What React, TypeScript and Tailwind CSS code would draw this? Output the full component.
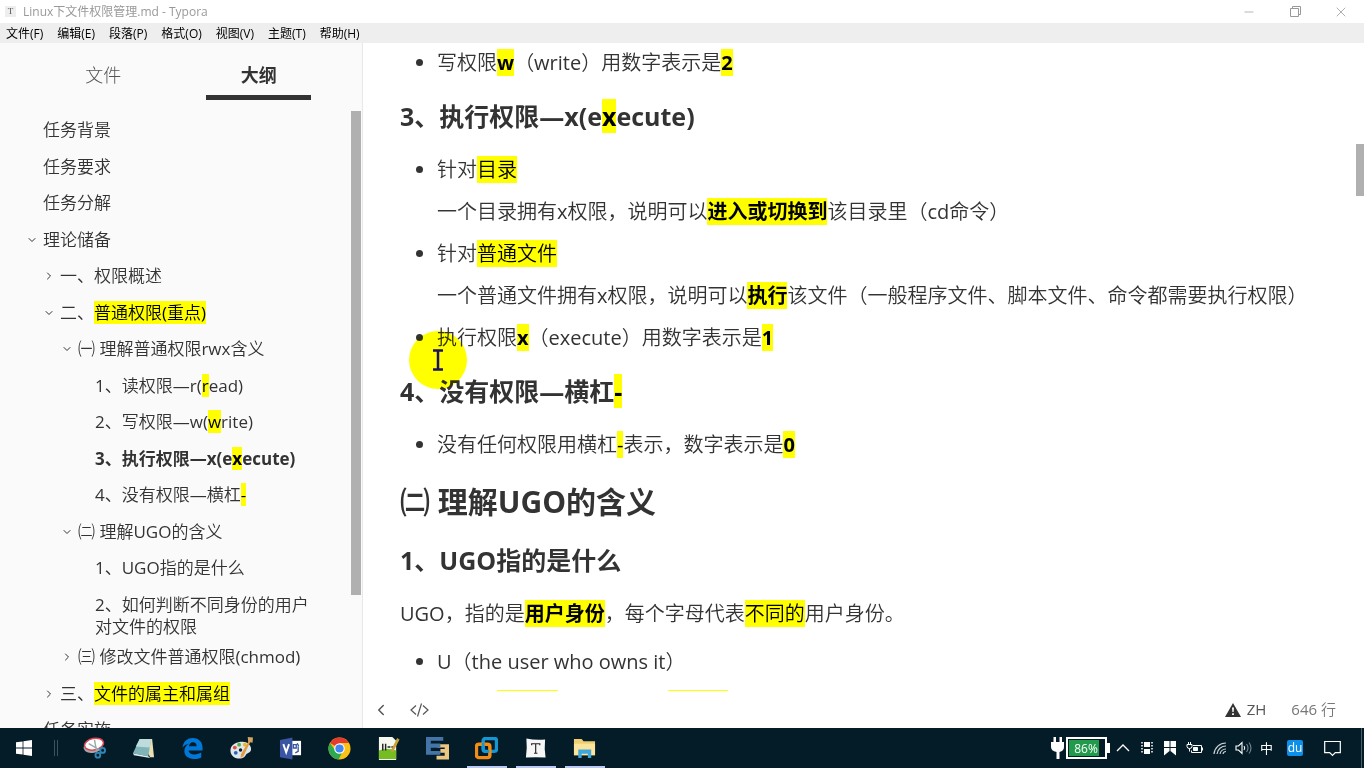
import type { ReactNode } from 'react';
import { clsx } from 'clsx';
import { ChevronDown, ChevronLeft, ChevronRight, Minus, X } from 'lucide-react';

const MENUS = ['文件(F)', '编辑(E)', '段落(P)', '格式(O)', '视图(V)', '主题(T)', '帮助(H)'];

type OutlineItem = {
    label: ReactNode;
    level: 0 | 1 | 2 | 3;
    state?: 'open' | 'closed';
    active?: boolean;
    wraps?: boolean;
};

const LEVEL_STYLES: Record<OutlineItem['level'], string> = {
    0: 'pl-[26px]',
    1: 'pl-[43px]',
    2: 'pl-[61px]',
    3: 'pl-[78px]',
};

// bold text keeps the full family, running text uses the lighter CJK cut
const BOLD = "font-['Open_Sans','Noto_Sans_CJK_SC',sans-serif] font-bold";
const BODY = "font-['Open_Sans','Noto_Sans_CJK_SC_DemiLight','Noto_Sans_CJK_SC',sans-serif] font-normal";

const OUTLINE: OutlineItem[] = [
    { label: '任务背景', level: 0 },
    { label: '任务要求', level: 0 },
    { label: '任务分解', level: 0 },
    { label: '理论储备', level: 0, state: 'open' },
    { label: '一、权限概述', level: 1, state: 'closed' },
    { label: <>二、<Mark>普通权限(重点)</Mark></>, level: 1, state: 'open' },
    { label: '㈠ 理解普通权限rwx含义', level: 2, state: 'open' },
    { label: <>1、读权限—r(<Mark>r</Mark>ead)</>, level: 3 },
    { label: <>2、写权限—w(<Mark>w</Mark>rite)</>, level: 3 },
    { label: <>3、执行权限—x(e<Mark>x</Mark>ecute)</>, level: 3, active: true },
    { label: <>4、没有权限—横杠<Mark>-</Mark></>, level: 3 },
    { label: '㈡ 理解UGO的含义', level: 2, state: 'open' },
    { label: '1、UGO指的是什么', level: 3 },
    { label: '2、如何判断不同身份的用户对文件的权限', level: 3, wraps: true },
    { label: '㈢ 修改文件普通权限(chmod)', level: 2, state: 'closed' },
    { label: <>三、<Mark>文件的属主和属组</Mark></>, level: 1, state: 'closed' },
    { label: '任务实施', level: 0 },
];

function Mark({ children, bold }: { children?: ReactNode; bold?: boolean }) {
    return <mark className={clsx('bg-[#ffff00] text-black', bold && BOLD)}>{children}</mark>;
}

function TitleBar() {
    return (
        <header className="flex h-[23px] shrink-0 items-center bg-white pl-[5px] text-[#999]">
            <span className="flex size-[11px] items-center justify-center bg-[#eee] font-['Liberation_Serif'] text-[9px] text-[#555]">T</span>
            <h1 className="ml-[7px] flex-1 text-[12px]">Linux下文件权限管理.md - Typora</h1>
            <button aria-label="Minimize" className="flex h-full w-[46px] items-center justify-center">
                <Minus size={14} strokeWidth={1.2} />
            </button>
            <button aria-label="Restore" className="flex h-full w-[46px] items-center justify-center">
                <svg width="11" height="11" viewBox="0 0 11 11" fill="none" stroke="currentColor">
                    <path d="M.5 2.500h8v8h-8zM2.500 2.500V.5h8v8h-2" />
                </svg>
            </button>
            <button aria-label="Close" className="flex h-full w-[46px] items-center justify-center">
                <X size={16} strokeWidth={1.2} />
            </button>
        </header>
    );
}

function Sidebar() {
    return (
        <aside className="flex w-[363px] shrink-0 flex-col border-r border-[#e8e8e8] bg-[#fafafa]">
            <div role="tablist" className="flex h-[57px] shrink-0 justify-evenly text-[18px]">
                <button role="tab" aria-selected="false" className="w-[105px] border-b-[5px] border-transparent pt-3 font-light text-[#555]">
                    文件
                </button>
                <button role="tab" aria-selected="true" className="w-[105px] border-b-[5px] border-[#333] pt-3 font-bold">
                    大纲
                </button>
            </div>
            <div className="mt-[11px] flex min-h-0 flex-1 overflow-hidden">
                <ul className="min-w-0 flex-1 pt-px text-[17px] leading-[22px]">
                    {OUTLINE.map((item, i) => (
                        <li
                            key={i}
                            className={clsx(
                                'flex items-start pr-8 pt-[7px] even:pt-2',
                                LEVEL_STYLES[item.level],
                                item.wraps ? 'pb-px' : 'pb-[7px]',
                                item.active ? BOLD : BODY
                            )}
                        >
                            <span className="flex h-[22px] w-[17px] shrink-0 items-center">
                                {item.state === 'open' && <ChevronDown size={12} strokeWidth={2} />}
                                {item.state === 'closed' && <ChevronRight size={12} strokeWidth={2} />}
                            </span>
                            <a href="#outline">{item.label}</a>
                        </li>
                    ))}
                </ul>
                <div className="mr-px h-[484px] w-[10px] shrink-0 bg-[#b0b0b0]" />
            </div>
        </aside>
    );
}

function Heading({ children }: { children: ReactNode }) {
    return <h4 className={clsx('my-5 text-[25px] leading-[35px]', BOLD)}>{children}</h4>;
}

function Bullets({ children }: { children: ReactNode }) {
    return <ul className="flex list-disc flex-col gap-[10px] pl-[37px]">{children}</ul>;
}

function Editor() {
    return (
        <article className={clsx('min-h-0 flex-1 overflow-hidden pl-[37px] pr-10 pt-1 text-[20px] leading-8', BODY)}>
            <Bullets>
                <li>写权限<Mark bold>w</Mark>（write）用数字表示是<Mark bold>2</Mark></li>
            </Bullets>
            <Heading>3、执行权限—x(e<Mark>x</Mark>ecute)</Heading>
            <Bullets>
                <li>
                    <p>针对<Mark>目录</Mark></p>
                    <p className="mt-[10px]">一个目录拥有x权限，说明可以<Mark bold>进入或切换到</Mark>该目录里（cd命令）</p>
                </li>
                <li>
                    <p>针对<Mark>普通文件</Mark></p>
                    <p className="mt-[10px]">一个普通文件拥有x权限，说明可以<Mark bold>执行</Mark>该文件（一般程序文件、脚本文件、命令都需要执行权限）</p>
                </li>
                <li>执行权限<Mark bold>x</Mark>（execute）用数字表示是<Mark bold>1</Mark></li>
            </Bullets>
            <Heading>4、没有权限—横杠<Mark>-</Mark></Heading>
            <Bullets>
                <li>没有任何权限用横杠<Mark>-</Mark>表示，数字表示是<Mark bold>0</Mark></li>
            </Bullets>
            <h3 className={clsx('my-[22px] text-[30px] leading-[38px]', BOLD)}>㈡ 理解UGO的含义</h3>
            <Heading>1、UGO指的是什么</Heading>
            <p className="mb-4">UGO，指的是<Mark bold>用户身份</Mark>，每个字母代表<Mark>不同的</Mark>用户身份。</p>
            <Bullets>
                <li>U（the user who owns it）</li>
            </Bullets>
            {/* highlights of the next line, cut off by the status bar */}
            <div className="mt-[12px] flex pl-[97px]">
                <span className="h-[27px] w-[61px] bg-[#ffff00]" />
                <span className="ml-[110px] h-[27px] w-[60px] bg-[#ffff00]" />
            </div>
        </article>
    );
}

function StatusBar() {
    return (
        <footer className={clsx('flex h-[37px] shrink-0 items-center bg-white pl-[9px] pr-7 text-[15px] text-[#555]', BODY)}>
            <button aria-label="Toggle sidebar"><ChevronLeft size={18} strokeWidth={2} /></button>
            <button aria-label="Source code mode" className="ml-5">
                <svg width="19" height="16" viewBox="0 0 19 16" fill="none" stroke="currentColor" strokeWidth="1.200">
                    <path d="M6 3.500 1 8l5 4.500M13 3.500 18 8l-5 4.500M11.500 1.500l-4 13" />
                </svg>
            </button>
            <span className="flex-1" />
            <svg width="16" height="14" viewBox="0 0 16 14" fill="#333">
                <path d="M8 0l8 14H0z" />
                <path d="M7 4.500h2l-.4 4.500H7.400zM7.100 10.200h1.800V12H7.100z" fill="#fff" />
            </svg>
            <button className="ml-[6px]">ZH</button>
            <button className="ml-[25px] text-[#777]">646 行</button>
        </footer>
    );
}

const APPS: { name: string; running?: boolean; icon: ReactNode }[] = [
    {
        name: 'Snipping Tool',
        icon: (
            <>
                <ellipse cx="10.500" cy="10" rx="10" ry="6.500" transform="rotate(-12 10.500 10)" fill="#a8a8a8" />
                <ellipse cx="11.500" cy="7.500" rx="10" ry="6" transform="rotate(-12 11.500 7.500)" fill="#fff" stroke="#dc4456" strokeWidth="1.600" />
                <path d="M12 3l2 11M6 7l12 7" stroke="#9aa" strokeWidth="1.500" />
                <g fill="none" stroke="#2f86b5" strokeWidth="2">
                    <circle cx="20.500" cy="14" r="2.500" /><circle cx="15.500" cy="19" r="2.500" />
                </g>
            </>
        ),
    },
    {
        name: 'Notepad',
        icon: (
            <>
                <path d="M8 2h13l2 19H19z" fill="#e9dfb2" />
                <path d="M8 2h12l-3 18-16-3z" fill="#7fb5b9" />
                <path d="M8 2h12l-1.500 9-14.500-1z" fill="#bfdcdd" />
                <path d="M1 17l16 3 2 2-17-3z" fill="#dfeff0" />
            </>
        ),
    },
    {
        name: 'Edge',
        icon: (
            <path
                d="M1.500 11C2.500 4.500 6.500 1 12.300 1 19 1 22.500 5.700 22.500 11v3H8c.2 3 3 4.200 6.200 4.200 2.600 0 4.900-.7 6.900-1.900v5c-2.200 1.200-4.800 1.700-7.700 1.700-6.300 0-9.900-3.600-9.900-8.300 0-3.600 2.100-6.600 5.300-8-3.400.7-5.800 2.300-7.300 4.300zM8.200 9.700h8.100c0-2.800-1.300-4.300-3.900-4.300-2.300 0-3.800 1.700-4.200 4.300z"
                fill="#0078d7"
            />
        ),
    },
    {
        name: 'Paint',
        icon: (
            <>
                <path d="M11 5c6-1 11 2.500 11 7.500 0 4-4 4-5 5.500s-2 4.500-7 4.500c-6 0-10-4-9.500-9S5 6 11 5z" fill="#dfe7ee" />
                <circle cx="5" cy="11" r="2" fill="#e2523b" /><circle cx="9.500" cy="8" r="2" fill="#56ad45" />
                <circle cx="15.500" cy="8" r="2" fill="#e9b72a" /><circle cx="6" cy="16.500" r="2" fill="#2c62b4" />
                <circle cx="11" cy="13.500" r="1.800" fill="#0b1c28" />
                <path d="M20 3.500l1.500 1L14 20l-3 2 .5-4z" fill="#e49b3f" />
                <path d="M18.500 0l5.500.5-.5 5.500-4.500-1z" fill="#d5a562" />
            </>
        ),
    },
    {
        name: 'Visio',
        icon: (
            <>
                <path d="M12 4h11v15H12z" fill="#fff" />
                <path d="M15 8h3v3.500h-3zM19 6.500l1.500 3M20 10v5l-3 1.500" fill="none" stroke="#3955a3" strokeWidth="1.400" />
                <path d="M1 3l13-2.500v23L1 21z" fill="#3955a3" />
                <path d="M4.500 7.500L7.500 16l3-8.500" fill="none" stroke="#fff" strokeWidth="2" />
            </>
        ),
    },
    {
        name: 'Chrome',
        icon: (
            <>
                <circle cx="12" cy="12" r="11.500" fill="#fbc116" />
                <path d="M12 12L2 6.300A11.500 11.500 0 0 1 22 6.300H12z" fill="#e33b2e" />
                <path d="M2 6.300A11.500 11.500 0 0 0 11 23.500l5-9.500-8 .5z" fill="#2da94f" />
                <circle cx="12" cy="12" r="5.500" fill="#fff" /><circle cx="12" cy="12" r="4.300" fill="#4285f4" />
            </>
        ),
    },
    {
        name: 'Notepad++',
        icon: (
            <>
                <path d="M2 0h14l4 4v20H2z" fill="#f4f8ef" />
                <path d="M2 14q9-3 18 0v9H2z" fill="#76bd22" />
                <path d="M6 7v7M9 7v7M11 10.500h3M15 10.500h3" stroke="#222" strokeWidth="1.500" />
                <path d="M21 1l2.500 1.500L17 15l-2 1v-3z" fill="#c9a13a" />
            </>
        ),
    },
    {
        name: 'Virtual Machines',
        icon: (
            <>
                <path d="M0 0h18v4H5v3h10v4H5v3.500h10v4H0z" fill="#4475a8" />
                <path d="M12 7.500h12v16H11v-4h8.500v-3H15v-4h4.500v-1.500H12z" fill="#edc682" />
                <path d="M5 7h10v4H5z" fill="#4475a8" />
            </>
        ),
    },
    {
        name: 'VMware',
        running: true,
        icon: (
            <>
                <rect x="8.500" y="1.500" width="14" height="13.500" rx="2.500" fill="none" stroke="#1697d1" strokeWidth="3.600" />
                <rect x="1.500" y="7.500" width="14" height="14" rx="2.500" fill="none" stroke="#f28c14" strokeWidth="3.600" />
                <path d="M8.500 6v6.500q0 2.500 2.500 2.500h4" fill="none" stroke="#1697d1" strokeWidth="3" />
            </>
        ),
    },
    {
        name: 'Typora',
        running: true,
        icon: (
            <>
                <path d="M2.500 1.500q9.500 2 19.500 1-1 10 .5 19-10-1-20.500 0 1.500-10 .5-20z" fill="#f6f6f6" />
                <path d="M8 8.500V7h8.500v1.500M12.200 7v10M10.500 17h3.500" fill="none" stroke="#222" strokeWidth="1.200" />
            </>
        ),
    },
    {
        name: 'File Explorer',
        running: true,
        icon: (
            <>
                <path d="M1 2h8l2 2.500h12V19H1z" fill="#f0cf73" />
                <path d="M1 7h22v12H1z" fill="#fbe49b" />
                <path d="M5.500 13h13.500v9h-3.500v-4.500H9V22H5.500z" fill="#41a5dd" />
            </>
        ),
    },
];

function Tray() {
    return (
        <div className="flex items-center text-white">
            <svg width="60" height="24" viewBox="0 0 60 24">
                <path d="M1 6h13v5q0 4-4.500 5v7h-3v-7Q1 15 1 11zM3.500 1h2.500v5H3.500zM9.500 1H12v5H9.500z" fill="#fff" />
                <rect x="17" y="2" width="39" height="20" fill="none" stroke="#fff" strokeWidth="2" />
                <path d="M57 7h3v10h-3z" fill="#fff" />
                <path d="M19 4h30v16H19z" fill="#219a4c" />
                <text x="36" y="17" textAnchor="middle" fontSize="12" fill="#fff">86%</text>
            </svg>
            <button aria-label="Show hidden icons" className="ml-[6px]">
                <svg width="14" height="14" viewBox="0 0 14 14" fill="none" stroke="#fff" strokeWidth="1.300"><path d="M1 10l6-6 6 6" /></svg>
            </button>
            <svg className="ml-[11px]" width="12" height="14" viewBox="0 0 12 14" fill="#fff">
                <path d="M3 1h6v5H3zM3 8h6v5H3z" />
                <path d="M1 1v12M11 1v12" stroke="#fff" strokeWidth="1.500" strokeDasharray="1.500 1.500" />
            </svg>
            <svg className="ml-[11px]" width="12" height="16" viewBox="0 0 12 16" fill="#fff">
                <path d="M0 1h5.500v6H0zM6.500 1H12v6H6.500zM0 8h5.500v3L0 15.500zM6.500 8H12v7.500L6.500 11z" />
            </svg>
            <svg className="ml-[10px]" width="17" height="14" viewBox="0 0 17 14" fill="none" stroke="#fff">
                <path d="M7 4.500h8.500v7h-10v-2M16.500 6.500v3M1 3.500h5v2q0 2-2.500 2T1 5.500zM2.500 1v2.500M4.500 1v2.500M3.500 7.500v3" />
                <path d="M7.500 6.500h4v3h-4z" fill="#fff" />
            </svg>
            <svg className="ml-[10px]" width="14" height="14" viewBox="0 0 14 14" fill="none" stroke="#ccd3d7" strokeWidth="1.200">
                <path d="M1 13A12 12 0 0 1 13 2M4 13a9 9 0 0 1 9-8M7 13a6 6 0 0 1 6-5M10 13a3 3 0 0 1 3-2.500" />
            </svg>
            <svg className="ml-[8px]" width="17" height="14" viewBox="0 0 17 14" fill="none" stroke="#fff" strokeWidth="1.100">
                <path d="M1 5h2.500L7 1.500v11L3.500 9H1zM9 5q1.500 2 0 4" />
                <path d="M11.500 3q3 4 0 8M14 1.500q4 5.500 0 11" stroke="#778890" />
            </svg>
            <button className="ml-[8px] text-[13px] leading-none">中</button>
            <button className="ml-[14px] size-4 rounded-[2px] bg-[#0c8fe8] text-[12px] leading-[14px]">du</button>
            <button aria-label="Notifications" className="ml-[21px] mr-5">
                <svg width="17" height="17" viewBox="0 0 17 17" fill="none" stroke="#fff" strokeWidth="1.200">
                    <path d="M.7 1.500h15.600v11.200h-5L8.500 15.500l-2.800-2.800h-5z" />
                </svg>
            </button>
            <span className="mr-[2px] h-10 w-px bg-[#4a5d68]" />
        </div>
    );
}

function Taskbar() {
    return (
        <nav className="flex h-10 shrink-0 items-center bg-[#041c28]">
            <button aria-label="Start" className="flex h-full w-12 items-center justify-center">
                <svg width="16" height="16" viewBox="0 0 16 16" fill="#fff">
                    <path d="M0 2.300 6.600 1.400v6.200H0zM7.400 1.300 16 0v7.600H7.400zM0 8.400h6.600v6.200L0 13.700zM7.400 8.400H16V16l-8.600-1.300z" />
                </svg>
            </button>
            <span className="ml-[6px] mr-[12px] h-4 w-[4px] border-x border-[#3d525d]" />
            {APPS.map((app) => (
                <button key={app.name} aria-label={app.name} className="flex h-full w-[49px] flex-col items-center">
                    <span className="flex flex-1 items-center pt-[2px]">
                        <svg width="23" height="23" viewBox="0 0 24 24">{app.icon}</svg>
                    </span>
                    <span className={clsx('h-[2px] w-10', app.running && 'bg-[#b9c8f5]')} />
                </button>
            ))}
            <span className="flex-1" />
            <Tray />
        </nav>
    );
}

export default function App() {
    return (
        <div lang="zh-CN" className="flex h-screen flex-col overflow-hidden bg-white font-['Open_Sans','Noto_Sans_CJK_SC',sans-serif] text-[#333]">
            <TitleBar />
            <nav className="flex h-5 shrink-0 items-center gap-[14px] bg-[#eee] pl-[6px] pt-px text-[12px] text-black">
                {MENUS.map((menu) => <button key={menu}>{menu}</button>)}
            </nav>
            <div className="flex min-h-0 flex-1">
                <Sidebar />
                <main className="relative flex min-w-0 flex-1 flex-col">
                    <div className="flex min-h-0 flex-1">
                        <Editor />
                        <div className="mt-[101px] h-[52px] w-2 shrink-0 bg-[#b0b0b0]" />
                    </div>
                    <StatusBar />
                    {/* mouse pointer with its highlight */}
                    <div className="pointer-events-none absolute left-[46px] top-[288px] flex size-[58px] items-center justify-center rounded-full bg-[#ffff00] mix-blend-multiply">
                        <svg width="12" height="22" viewBox="0 0 12 22" fill="none" stroke="#1b1060" strokeWidth="2.500">
                            <path d="M1 1.500h10M1 20.500h10M6 1.500v19" />
                        </svg>
                    </div>
                </main>
            </div>
            <Taskbar />
        </div>
    );
}
